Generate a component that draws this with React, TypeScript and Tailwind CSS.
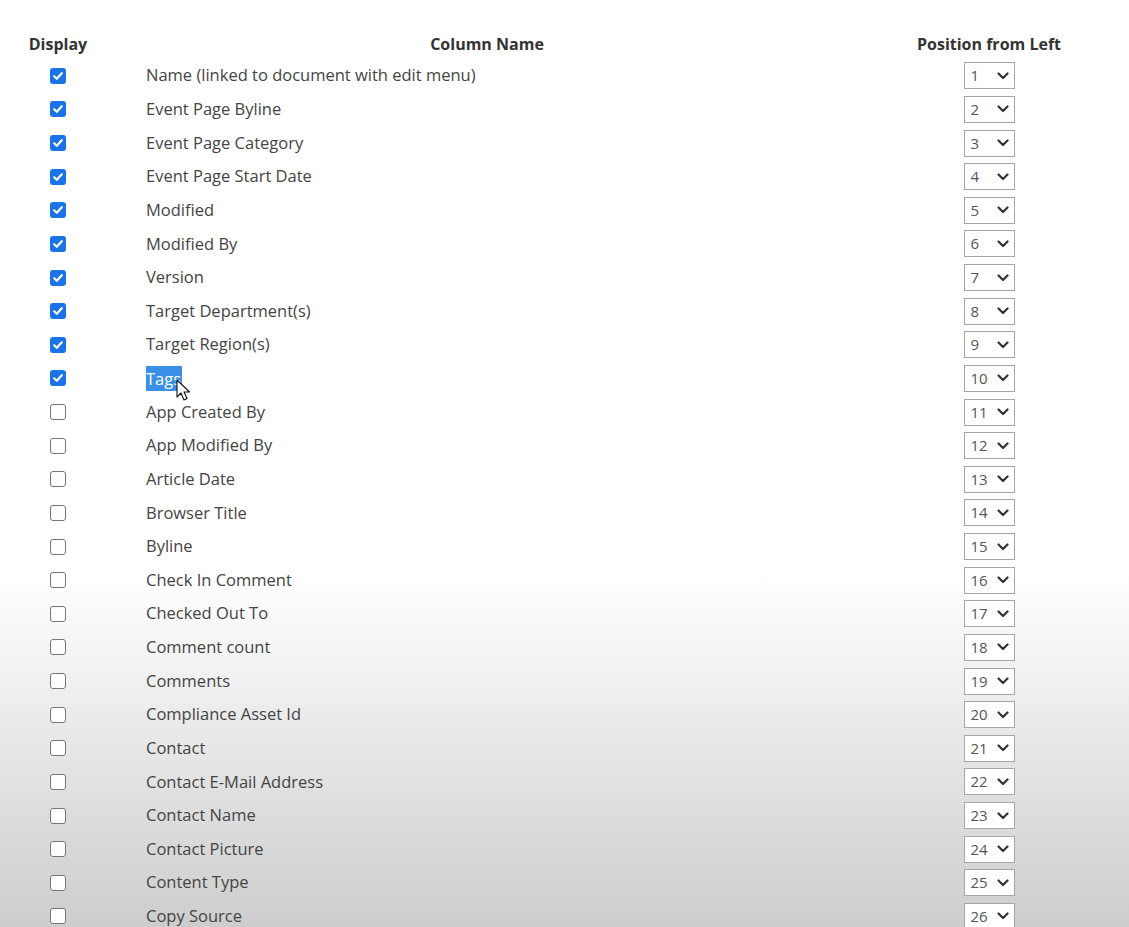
import React from "react";

const names = [
  "Name (linked to document with edit menu)",
  "Event Page Byline",
  "Event Page Category",
  "Event Page Start Date",
  "Modified",
  "Modified By",
  "Version",
  "Target Department(s)",
  "Target Region(s)",
  "Tags",
  "App Created By",
  "App Modified By",
  "Article Date",
  "Browser Title",
  "Byline",
  "Check In Comment",
  "Checked Out To",
  "Comment count",
  "Comments",
  "Compliance Asset Id",
  "Contact",
  "Contact E-Mail Address",
  "Contact Name",
  "Contact Picture",
  "Content Type",
  "Copy Source",
];

function Checkbox({ checked }: { checked: boolean }) {
  if (checked) {
    return (
      <div className="w-[16px] h-[16px] rounded-[3px] bg-[#1a73e8] flex items-center justify-center">
        <svg width="12" height="12" viewBox="0 0 12 12">
          <path d="M2.2 6.3 L4.8 8.8 L9.8 3.2" fill="none" stroke="#fff" strokeWidth="2.2" strokeLinecap="round" strokeLinejoin="round" />
        </svg>
      </div>
    );
  }
  return <div className="w-[16px] h-[16px] rounded-[3px] border border-[#767676] bg-white" />;
}

function Select({ value }: { value: number }) {
  return (
    <div className="w-[51px] h-[27px] border border-[#a6a6a6] bg-white flex items-center justify-between pl-[6px] pr-[5px]">
      <span className="text-[15px] text-[#555] leading-none">{value}</span>
      <svg width="12" height="8" viewBox="0 0 12 8">
        <path d="M1.5 1.5 L6 6 L10.5 1.5" fill="none" stroke="#333" strokeWidth="2.2" strokeLinecap="round" strokeLinejoin="round" />
      </svg>
    </div>
  );
}

export default function App() {
  return (
    <div
      className="w-full h-[927px] overflow-hidden bg-[linear-gradient(to_bottom,#ffffff_62%,#cdcdcd_100%)] text-[#333]"
      style={{ fontFamily: '"Segoe UI", "Open Sans", "Noto Sans", sans-serif' }}
    >
      <div className="pt-[29px] grid grid-cols-[116px_712px_1fr]">
        <div className="h-[30px] flex justify-center text-[16px] font-bold text-[#333] leading-[30px]">Display</div>
        <div className="h-[30px] pl-[30px] text-center text-[16px] font-bold text-[#333] leading-[30px]">Column Name</div>
        <div className="h-[30px] pl-[21px] text-center text-[16px] font-bold text-[#333] leading-[30px]">Position from Left</div>
        {names.map((n, i) => (
          <React.Fragment key={n}>
            <div className="h-[33.64px] flex items-center justify-center">
              <Checkbox checked={i < 10} />
            </div>
            <div className="h-[33.64px] pl-[30px] flex items-center text-[16.5px] text-[#444]">
              {n === "Tags" ? (
                <span className="relative bg-[#3b8fe6] text-white leading-[25px] h-[25px] inline-block pr-[1px]">
                  Tags
                  <svg className="absolute left-[30px] top-[13px]" width="16" height="24" viewBox="0 0 16 24">
                    <path d="M1 1 L1 18 L5 14 L8 21 L11 19.5 L8 13 L13.5 13 Z" fill="#fff" stroke="#111" strokeWidth="1.1" strokeLinejoin="round" />
                  </svg>
                </span>
              ) : (
                <span>{n}</span>
              )}
            </div>
            <div className="h-[33.64px] pl-[21px] flex items-center justify-center">
              <Select value={i + 1} />
            </div>
          </React.Fragment>
        ))}
      </div>
    </div>
  );
}
